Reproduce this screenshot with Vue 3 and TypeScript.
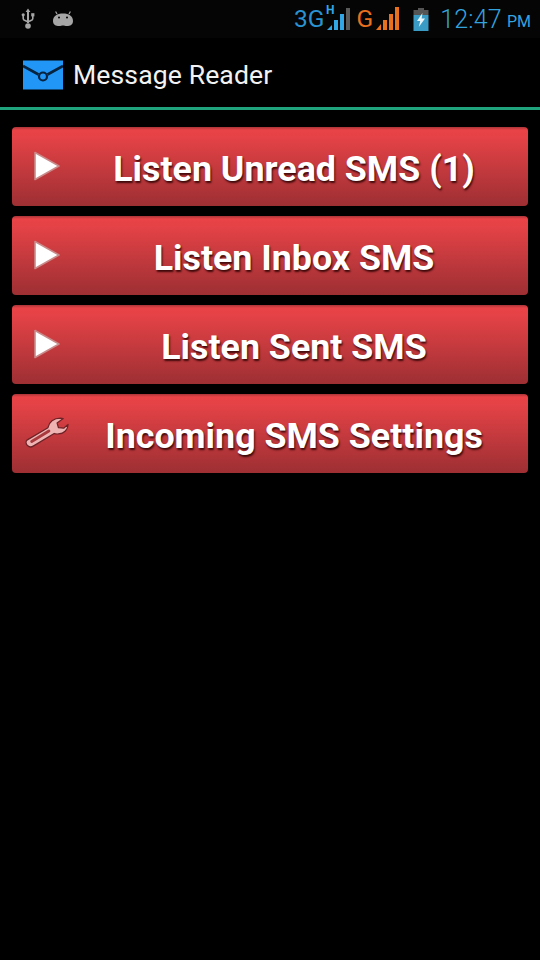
<script setup lang="ts">
interface Item { label: string; icon: 'play' | 'wrench' }
const items: Item[] = [
  { label: 'Listen Unread SMS (1)', icon: 'play' },
  { label: 'Listen Inbox SMS', icon: 'play' },
  { label: 'Listen Sent SMS', icon: 'play' },
  { label: 'Incoming SMS Settings', icon: 'wrench' },
]
</script>

<template>
  <div class="screen">
    <header class="status">
      <div class="status-left">
        <svg class="usb" width="14" height="22" viewBox="0 0 14 22">
          <path d="M7 0.5 L9.4 4 H8 V15 H6 V4 H4.6 Z" fill="#a6a6a6" />
          <path d="M2.2 8 V10.5 Q2.2 12 4 12.6 L7 13.8 L10 12.6 Q11.8 12 11.8 10.5 V8" fill="none" stroke="#a6a6a6" stroke-width="1.6" />
          <rect x="0.6" y="5.2" width="3.2" height="3.2" rx="1.6" fill="#a6a6a6" />
          <rect x="10.2" y="5.2" width="3.2" height="3.2" fill="#a6a6a6" />
          <circle cx="7" cy="18" r="2.8" fill="#a6a6a6" />
        </svg>
        <svg class="droid" width="22" height="18" viewBox="0 0 22 18">
          <path d="M5 4 L3.6 1.5 M17 4 L18.4 1.5" stroke="#a6a6a6" stroke-width="1.2" />
          <path d="M1 11 C1 6 5 3.5 11 3.5 C17 3.5 21 6 21 11 C21 15 18 16 15 16 C13 16 12.5 15.4 11 15.4 C9.5 15.4 9 16 7 16 C4 16 1 15 1 11 Z" fill="#a6a6a6" />
          <circle cx="7" cy="7.6" r="1" fill="#000" />
          <circle cx="15" cy="7.6" r="1" fill="#000" />
        </svg>
      </div>
      <div class="status-right">
        <span class="net blue">3G</span>
        <svg class="signal" width="25" height="26" viewBox="0 0 25 26">
          <text x="0" y="10" class="h">H</text>
          <path d="M1 26 L6 26 L6 21 Z" fill="#33a6e6" />
          <rect x="8" y="16" width="4" height="10" fill="#33a6e6" />
          <rect x="14" y="10" width="4" height="16" fill="#33a6e6" />
          <rect x="20" y="4" width="4" height="22" fill="#5a5a5a" />
        </svg>
        <span class="net orange">G</span>
        <svg class="signal2" width="24" height="24" viewBox="0 0 24 24">
          <path d="M0 24 L5 24 L5 18 Z" fill="#e8701f" />
          <rect x="7" y="14" width="4" height="10" fill="#e8701f" />
          <rect x="13" y="8" width="4" height="16" fill="#e8701f" />
          <rect x="19" y="1" width="4" height="23" fill="#e8701f" />
        </svg>
        <svg class="battery" width="16" height="23" viewBox="0 0 16 23">
          <rect x="5" y="0" width="6" height="3" fill="#555" />
          <rect x="0.5" y="2" width="15" height="5" fill="#555" />
          <rect x="0.5" y="7" width="15" height="16" fill="#3a9cc4" />
          <path d="M9.5 5 L4 13 H7.2 L5.8 19 L12 10.5 H8.6 Z" fill="#e8f6fb" />
        </svg>
        <span class="time">12:47</span>
        <span class="ampm">PM</span>
      </div>
    </header>

    <div class="action-bar">
      <svg class="logo" width="40" height="30" viewBox="0 0 40 30">
        <rect width="40" height="29" y="0.5" fill="#2196f7" />
        <path d="M0 6 L15.5 14.5 M24.5 14.5 L40 6" stroke="#06233f" stroke-width="2.6" fill="none" />
        <circle cx="20" cy="16.5" r="4" fill="none" stroke="#06233f" stroke-width="2.2" />
      </svg>
      <span class="title">Message Reader</span>
    </div>
    <div class="divider"></div>

    <main class="list">
      <button v-for="item in items" :key="item.label" class="btn" type="button">
        <span class="icon-box">
          <svg v-if="item.icon === 'play'" class="play" width="30" height="32" viewBox="0 0 30 32">
            <path d="M3 2.5 L27 16 L3 29.5 Z" fill="#fff" stroke="#c98a8a" stroke-width="1.6" stroke-linejoin="round" />
          </svg>
          <svg v-else class="wrench" width="44" height="33" viewBox="0 0 46 34">
            <path d="M2 25 L24 12 C25 6 30 2 37 2 L40 2.4 L33.5 7 L35 12 L40.5 12.5 L45 8.5 C45 14 41 18 35 18.5 C33 18.7 31.5 18.4 30.5 18 L9 31 C6 33 3.5 32 2 30 C1 28.5 0.8 26 2 25 Z" fill="#eeb4b4" stroke="#6d2226" stroke-width="1.3" stroke-linejoin="round" />
            <path d="M7 26.5 L25 15.5" stroke="#a83a3e" stroke-width="3" stroke-linecap="round" />
          </svg>
        </span>
        <span class="label">{{ item.label }}</span>
      </button>
    </main>
  </div>
</template>

<style>
html, body { margin: 0; background: #000; }
</style>

<style scoped>
.screen {
  width: 540px;
  height: 960px;
  background: #000;
  font-family: Roboto, "Liberation Sans", sans-serif;
  overflow: hidden;
}
.status {
  height: 38px;
  box-sizing: border-box;
  display: flex;
  align-items: center;
  justify-content: space-between;
  padding: 0 9px 0 21px;
  background: #050505;
}
.status-left { display: flex; align-items: center; gap: 17px; }
.droid { margin-top: -1px; }
.status-right { display: flex; align-items: center; }
.net { font-size: 24.5px; line-height: 30px; font-weight: 400; }
.blue { color: #2a93d2; }
.orange { color: #e8701f; margin-left: 6px; }
.h { font-size: 12px; font-weight: 700; fill: #33a6e6; font-family: Roboto, sans-serif; }
.signal { margin: -4px 0 0 1px; }
.signal2 { margin: -2px 0 0 3px; }
.battery { margin: 0 0 0 13px; }
.time { color: #33a3de; font-size: 25px; font-weight: 300; margin-left: 11px; letter-spacing: 0.2px; }
.ampm { color: #33a3de; font-size: 16px; margin: 5px 0 0 5px; }
.action-bar {
  height: 69px;
  box-sizing: border-box;
  display: flex;
  align-items: center;
  padding: 5px 0 0 23px;
  gap: 10px;
}
.logo { display: block; margin-top: -1px; }
.title { color: #f2f2f2; font-size: 26.6px; line-height: 32px; letter-spacing: 0.1px; }
.divider { height: 3px; background: #1fa37c; }
.list {
  display: flex;
  flex-direction: column;
  gap: 10px;
  padding: 17px 12px 0;
}
.btn {
  position: relative;
  display: flex;
  align-items: center;
  justify-content: center;
  height: 79px;
  width: 516px;
  padding: 5px 0 0 48px;
  box-sizing: border-box;
  border: 0;
  border-radius: 4px;
  background: linear-gradient(to bottom, #a83438 0, #e94347 3px, #e34246 15%, #9d2f33 100%);
  color: #fff;
  font-family: inherit;
  font-size: 35.8px;
  font-weight: 700;
  text-shadow: 1px 2px 2px rgba(40, 0, 0, 0.85);
}
.icon-box {
  position: absolute;
  left: 0;
  top: 0;
  bottom: 0;
  width: 70px;
}
.play { position: absolute; left: 20px; top: 23px; }
.wrench { position: absolute; left: 13px; top: 22px; }
.label { white-space: nowrap; }
</style>
